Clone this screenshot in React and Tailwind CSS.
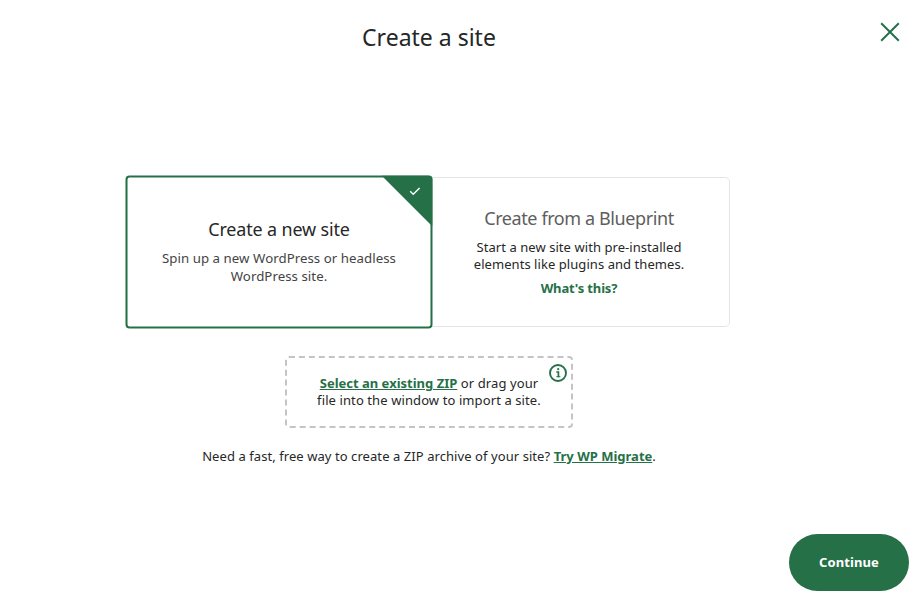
function CloseIcon() {
  return (
    <svg width="20" height="20" viewBox="0 0 20 20" fill="none" stroke="#267048" strokeWidth="2">
      <path d="M1.2 1.2 18.8 18.8M18.8 1.2 1.2 18.8" />
    </svg>
  );
}

function InfoIcon() {
  return (
    <svg width="18" height="18" viewBox="0 0 18 18" fill="none" stroke="#267048">
      <circle cx="9" cy="9" r="8" strokeWidth="1.9" />
      <path d="M7.3 8h2.1v5.2" strokeWidth="1.7" />
      <path d="M7.4 12.7h4" strokeWidth="1" />
      <circle cx="9.2" cy="5.2" r="1.1" fill="#267048" stroke="none" />
    </svg>
  );
}

function SelectedCorner() {
  return (
    <svg className="absolute -top-0.5 -right-0.5" width="50" height="50" viewBox="0 0 51 51">
      <path d="M0 0H47Q51 0 51 4V51Z" fill="#267048" />
      <path d="M28.7 15.8 31.7 18.8 38.1 12.4" fill="none" stroke="#fff" strokeWidth="1.4" />
    </svg>
  );
}

export default function App() {
  return (
    <div className="flex h-[602px] w-[914px] flex-col overflow-hidden bg-white font-['Noto_Sans','Open_Sans',sans-serif] text-[13px] leading-[17px] text-[#262727]">
      <header className="flex h-[177px] items-start justify-between pr-[14px] pt-[22px]">
        <h1 className="-mt-px w-[858px] text-center text-[23px] leading-8">Create a site</h1>
        <button aria-label="Close" className="-ml-2">
          <CloseIcon />
        </button>
      </header>

      <main className="flex w-[858px] flex-col items-center">
        <div className="flex w-[602px] items-center">
          <section className="relative z-10 flex h-[150px] w-[301px] translate-x-[0.5px] scale-[1.02] flex-col items-center justify-center rounded-[4px] border-2 border-[#267048] bg-white pb-[3px] text-center">
            <SelectedCorner />
            <h2 className="text-[17.6px] leading-6 tracking-[-0.15px]">Create a new site</h2>
            <p className="mt-[9px] tracking-[0.04px] text-[#444]">
              Spin up a new WordPress or headless
              <br />
              WordPress site.
            </p>
          </section>
          <section className="flex h-[150px] w-[301px] flex-col items-center justify-center rounded-r-[5px] border border-l-0 border-[#e5e5e5] pb-0.5 text-center">
            <h2 className="text-[18px] leading-6 tracking-[-0.4px] text-[#5d5e5e]">Create from a Blueprint</h2>
            <p className="mt-[9px] tracking-[0.06px]">
              Start a new site with pre-installed
              <br />
              elements like plugins and themes.
            </p>
            <a className="mt-[7px] font-bold tracking-[-0.15px] text-[#267048]">What's this?</a>
          </section>
        </div>

        <section className="relative mt-[29px] flex h-[72px] w-[288px] items-center justify-center rounded-[4px] border-2 border-dashed border-[#c4c4c4] text-center">
          <p>
            <a className="font-bold text-[#267048] underline">Select an existing ZIP</a>
            <span className="tracking-[0.1px]">
              {" "}or drag your
              <br />
              file into the window to import a site.
            </span>
          </p>
          <span className="absolute right-[4px] top-[6px]">
            <InfoIcon />
          </span>
        </section>

        <p className="mt-5 tracking-[0.07px]">
          Need a fast, free way to create a ZIP archive of your site?{" "}
          <a className="font-bold tracking-normal text-[#267048] underline">Try WP Migrate</a>.
        </p>
      </main>

      <footer className="mt-auto flex justify-end pb-[11px] pr-[5px]">
        <button className="h-[57px] w-[120px] rounded-full bg-[#267048] pb-px font-bold tracking-[0.1px] text-white">Continue</button>
      </footer>
    </div>
  );
}
